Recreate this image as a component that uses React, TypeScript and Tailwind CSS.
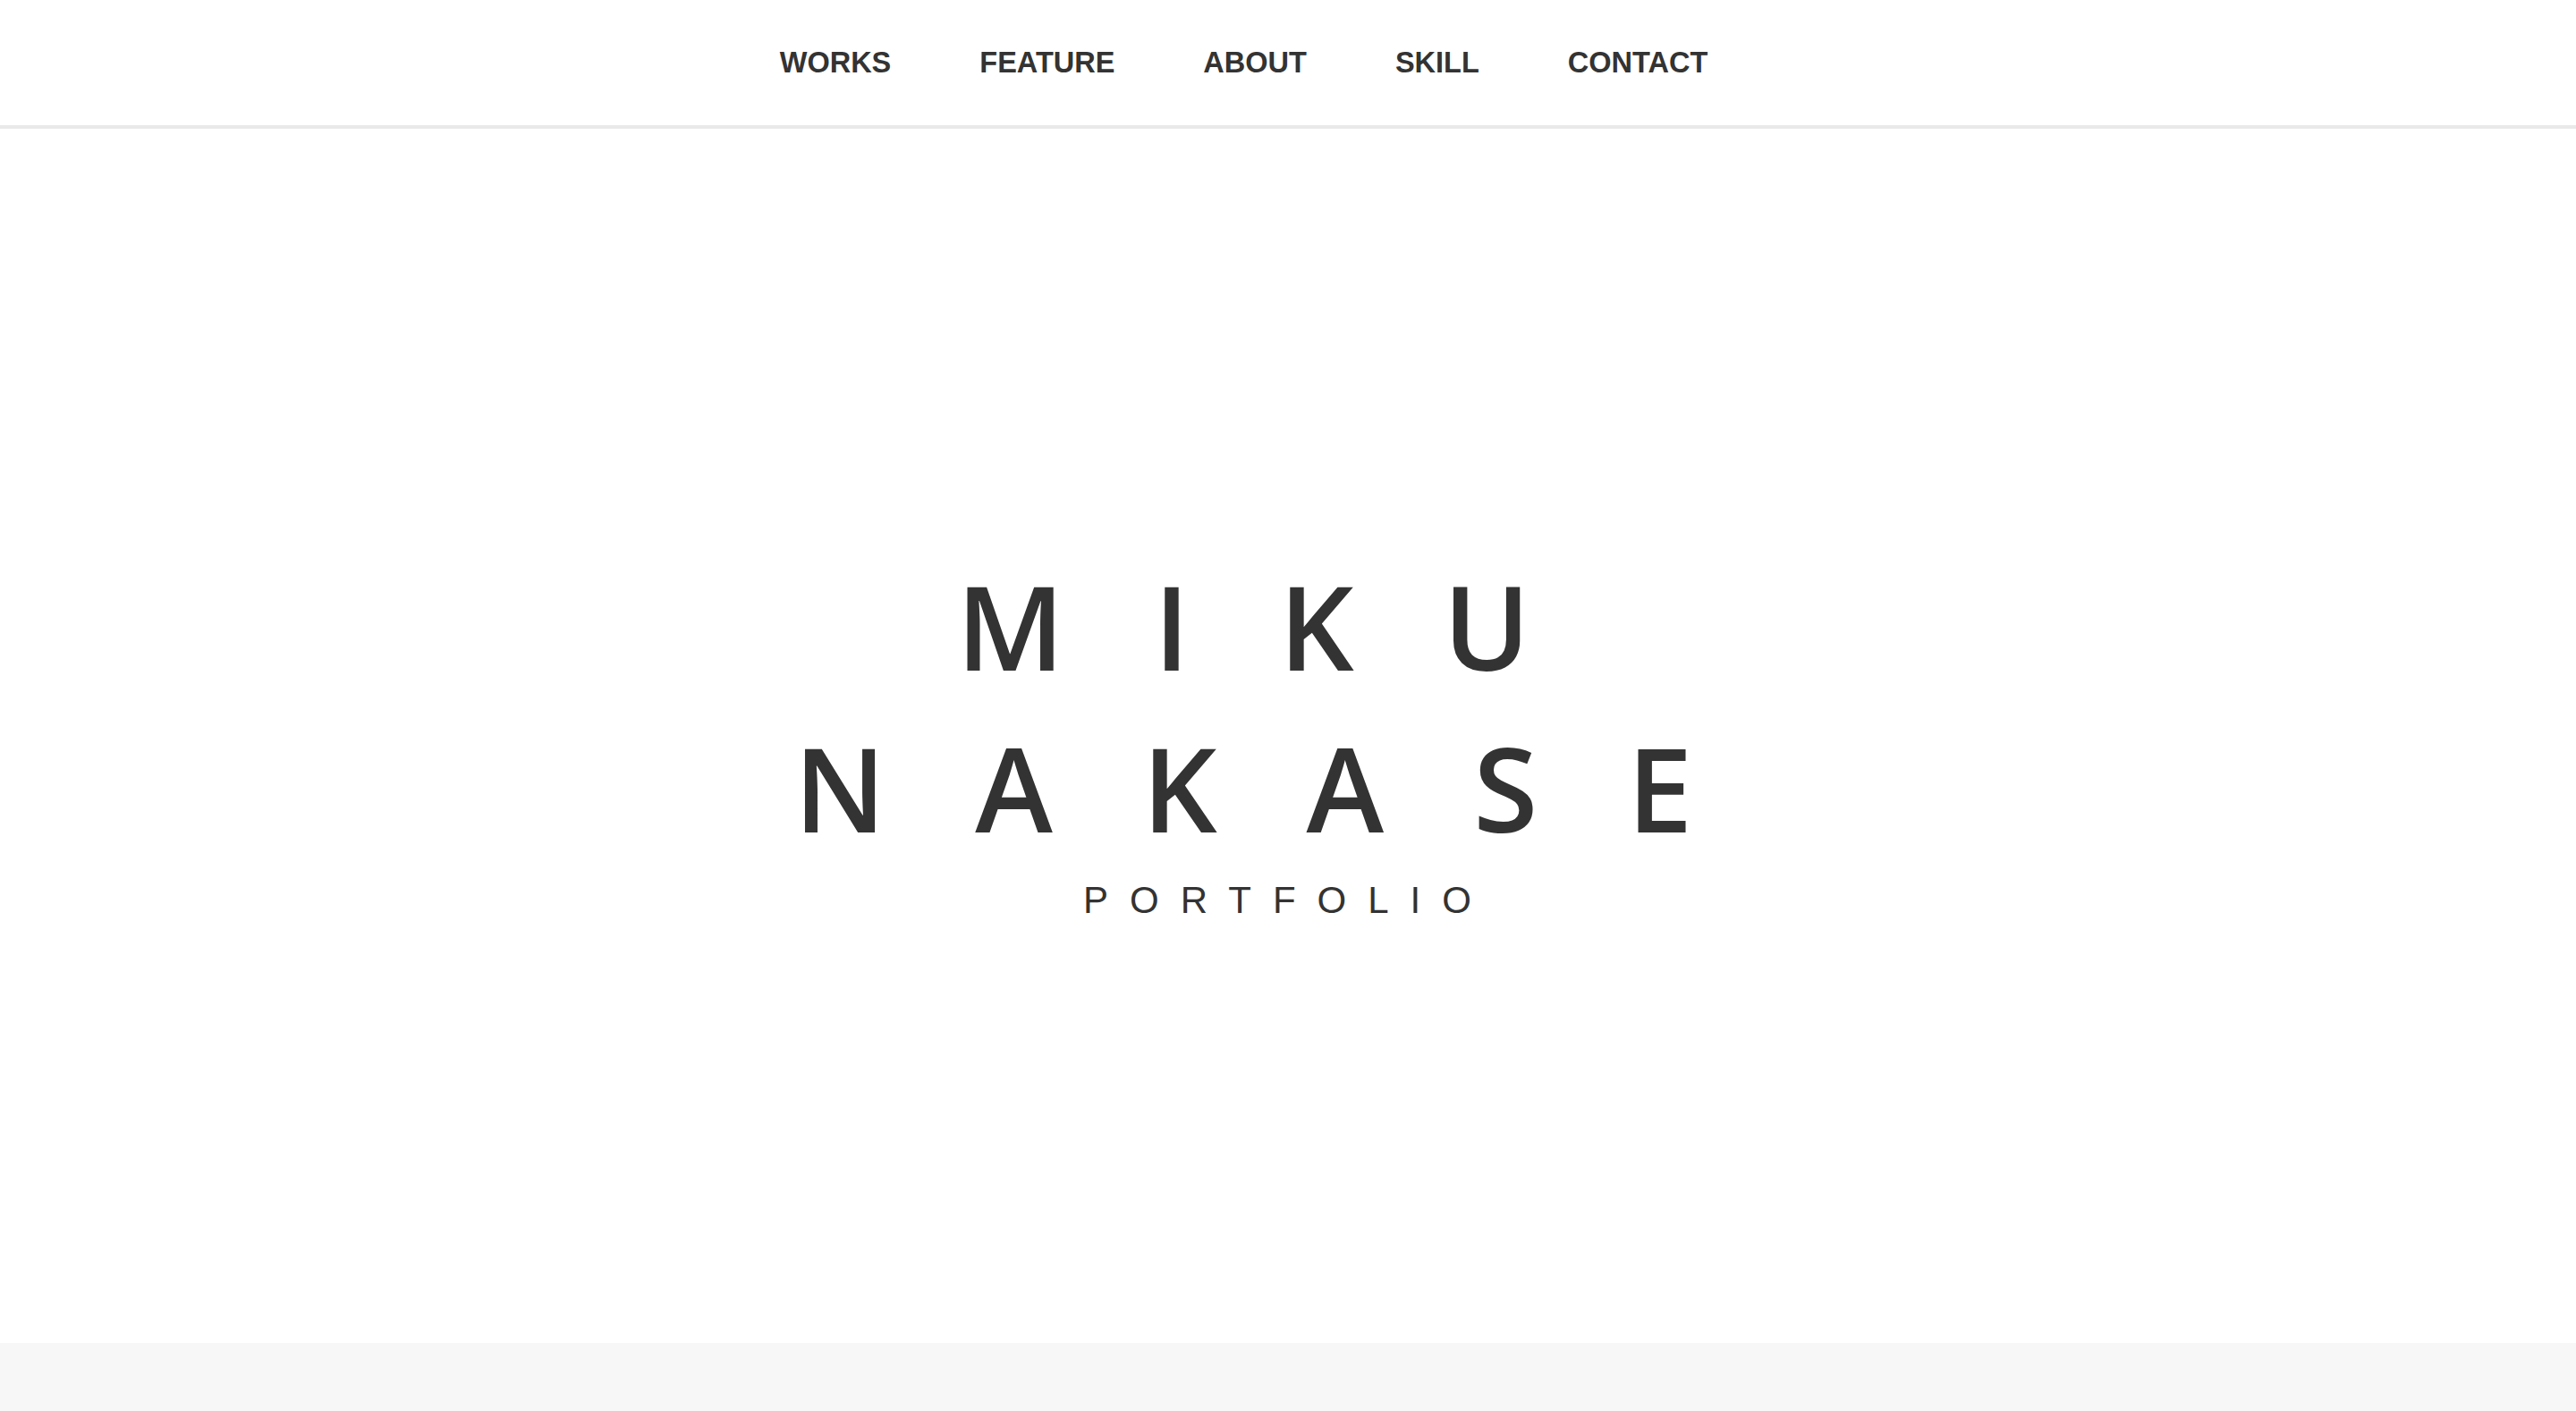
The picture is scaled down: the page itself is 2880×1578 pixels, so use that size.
export default function App() {
  const nav = ["WORKS", "FEATURE", "ABOUT", "SKILL", "CONTACT"];
  return (
    <div className="min-h-screen bg-white text-[#333333]">
      <header className="h-[144px] border-b-4 border-[#e9e9e9] bg-white">
        <nav className="h-[140px] flex items-center justify-center">
          <ul className="flex">
            {nav.map((n) => (
              <li
                key={n}
                className="mr-[99px] text-[32.5px] font-bold leading-normal [font-family:'Liberation_Sans',Arial,sans-serif]"
              >
                {n}
              </li>
            ))}
          </ul>
        </nav>
      </header>
      <main className="h-[1358px] flex flex-col items-center justify-center">
        <h1 className="text-center text-[131px] leading-[181px] font-[650] tracking-[100px] [font-family:'Open_Sans',sans-serif]">
          <span className="block">MIKU</span>
          <span className="block">NAKASE</span>
        </h1>
        <p className="mt-[4px] text-center text-[42px] leading-[63px] tracking-[24px] [font-family:'Liberation_Sans',Arial,sans-serif]">
          PORTFOLIO
        </p>
      </main>
      <section className="h-[76px] bg-[#f7f7f7]" />
    </div>
  );
}
